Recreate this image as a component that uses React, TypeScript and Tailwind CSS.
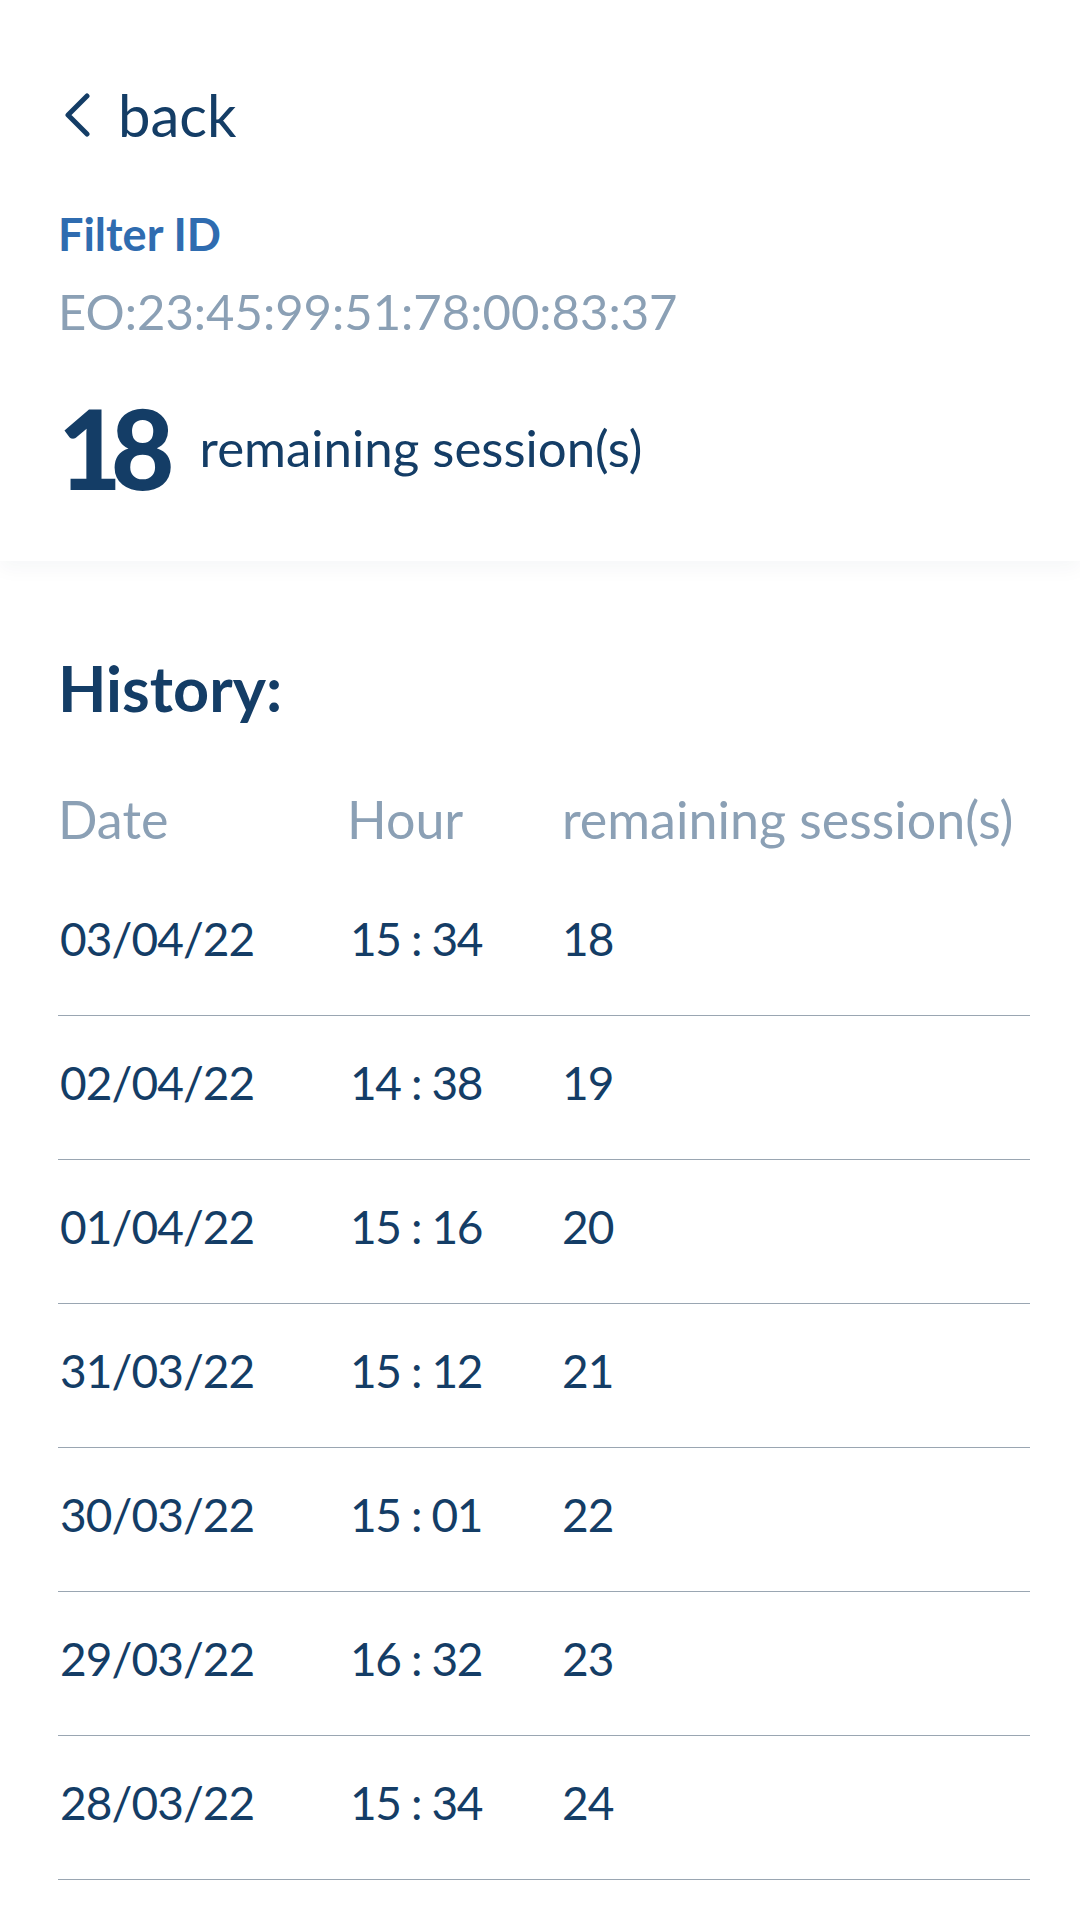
import * as React from 'react';

const rows = [
    { date: '03/04/22', hour: '15 : 34', left: '18' },
    { date: '02/04/22', hour: '14 : 38', left: '19' },
    { date: '01/04/22', hour: '15 : 16', left: '20' },
    { date: '31/03/22', hour: '15 : 12', left: '21' },
    { date: '30/03/22', hour: '15 : 01', left: '22' },
    { date: '29/03/22', hour: '16 : 32', left: '23' },
    { date: '28/03/22', hour: '15 : 34', left: '24' },
];

export default function App() {
    return (
        <div className="min-h-screen w-[1080px] bg-white font-['Lato',sans-serif] text-[#143d66]">
            {/* Header card */}
            <div className="flex flex-col bg-white pl-[58px] pt-[87px] pb-[58px] shadow-[0_8px_18px_rgba(20,40,70,0.04)]">
                <div className="flex h-[56px] items-center gap-[26px]">
                    <svg width="30" height="44" viewBox="0 0 30 44" fill="none" className="ml-[4px]">
                        <path d="M25 3 L6 22 L25 41" stroke="#143d66" strokeWidth="5" strokeLinecap="round" strokeLinejoin="round" />
                    </svg>
                    <span className="text-[58px] leading-none">back</span>
                </div>

                <div className="mt-[69px] text-[45px] font-bold leading-none text-[#2f6cb0]">Filter ID</div>
                <div className="mt-[30px] text-[49px] leading-none text-[#8ba0b5]">EO:23:45:99:51:78:00:83:37</div>

                <div className="mt-[55px] flex h-[112px] items-center gap-[36px]">
                    <span className="text-[110px] font-black leading-none tracking-[-0.1em]">18</span>
                    <span className="text-[51px] leading-none">remaining session(s)</span>
                </div>
            </div>

            {/* History */}
            <div className="flex flex-col pl-[58px] pr-[50px] pt-[95px]">
                <h2 className="text-[63px] font-bold leading-none">History:</h2>

                <div className="mt-[74px] flex h-[52px] items-center text-[52px] leading-none text-[#8ba0b5]">
                    <span className="w-[289px]">Date</span>
                    <span className="w-[215px]">Hour</span>
                    <span>remaining session(s)</span>
                </div>

                <div className="mt-[27px] flex flex-col">
                    {rows.map((r) => (
                        <div key={r.date} className="flex h-[144px] items-center border-b-[1.5px] border-[#9aa6b2] pb-[10px] text-[46px] leading-none tracking-[-0.02em]">
                            <span className="w-[292px] pl-[2px]">{r.date}</span>
                            <span className="w-[212px] tracking-[-0.03em]">{r.hour}</span>
                            <span>{r.left}</span>
                        </div>
                    ))}
                </div>
            </div>
        </div>
    );
}
